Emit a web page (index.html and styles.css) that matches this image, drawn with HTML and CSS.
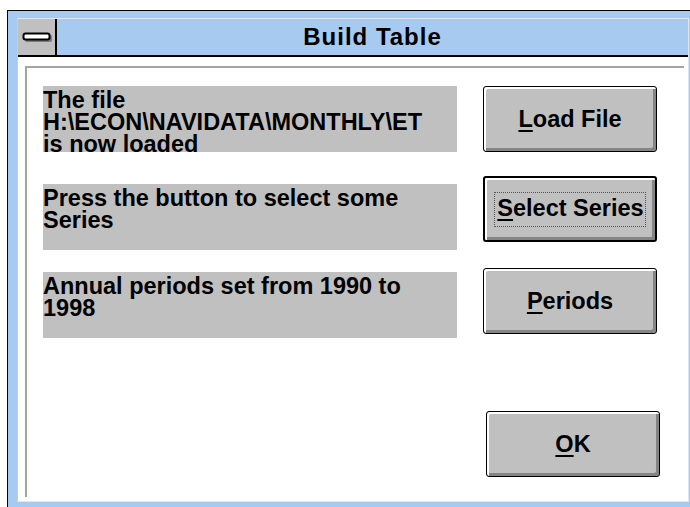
FILE: index.html
```html
<!DOCTYPE html>
<html lang="en">
<head>
<meta charset="utf-8">
<title>Build Table</title>
<link rel="stylesheet" href="styles.css">
</head>
<body>
<div class="window">
  <div class="frame">
    <div class="titlebar">
      <div class="sysmenu">
        <svg width="37" height="36" viewBox="0 0 37 36" aria-hidden="true">
          <rect x="7" y="16" width="27" height="7" rx="2" fill="#7a7a7a"/>
          <rect x="5.5" y="14.5" width="26" height="6" rx="2" fill="#fff" stroke="#000" stroke-width="2"/>
        </svg>
      </div>
      <div class="caption">Build Table</div>
    </div>
    <div class="client">
      <div class="panel">
        <div class="labels">
          <div class="label">The file<br><span class="path">H:\ECON\NAVIDATA\MONTHLY\ET</span><br>is now loaded</div>
          <div class="label label-series">Press the button to select some<br>Series</div>
          <div class="label label-periods">Annual periods set from 1990 to<br>1998</div>
        </div>
        <div class="buttons">
          <button class="btn" type="button"><u>L</u>oad File</button>
          <button class="btn btn-default btn-series" type="button"><span class="focus"><u>S</u>elect Series</span></button>
          <button class="btn btn-periods" type="button"><u>P</u>eriods</button>
          <button class="btn btn-ok" type="button"><u>O</u>K</button>
        </div>
      </div>
    </div>
  </div>
</div>
</body>
</html>
```

FILE: styles.css
```css
html, body {
  margin: 0;
  padding: 0;
  background: #fff;
  overflow: hidden;
}

body {
  width: 690px;
  height: 507px;
  font-family: "Liberation Sans", Arial, sans-serif;
  font-weight: bold;
  color: #000;
}

/* outer window: black edge + sky-blue sizing frame */
.window {
  margin: 10px 0 0 7px;
  width: 700px;
  height: 520px;
  border-top: 1px solid #000;
  border-left: 1px solid #000;
  background: #a6caf0;
  padding: 7px 0 0 9px;
  box-sizing: border-box;
}

.frame {
  width: 672px;
  height: 484px;
  box-sizing: border-box;
  border: 1px solid #dfe6ef;
  border-left-color: #c8ccd2;
  display: flex;
  flex-direction: column;
}

.titlebar {
  display: flex;
  height: 38px;
  box-sizing: border-box;
  border-bottom: 2px solid #000;
  background: #a6caf0;
}

.sysmenu {
  width: 37px;
  height: 36px;
  background: #c0c0c0;
  border-right: 2px solid #000;
}

.sysmenu svg {
  display: block;
}

.caption {
  flex: 1;
  text-align: center;
  font-size: 24px;
  letter-spacing: 1px;
  line-height: 36px;
}

.client {
  flex: 1;
  background: #fff;
  padding: 9px 4px 4px 7px;
  display: flex;
}

/* sunken group area */
.panel {
  flex: 1;
  border-top: 2px solid #a4a4a4;
  border-left: 2px solid #a4a4a4;
  padding: 18px 0 0 16px;
  display: flex;
  gap: 26px;
  align-items: flex-start;
}

.labels {
  display: flex;
  flex-direction: column;
  width: 414px;
}

.label {
  height: 66px;
  box-sizing: border-box;
  padding-top: 3px;
  background: #c0c0c0;
  font-size: 23.5px;
  line-height: 22px;
  overflow: hidden;
  white-space: nowrap;
}

.label-series {
  margin-top: 32px;
}

.label-periods {
  margin-top: 22px;
}

.buttons {
  display: flex;
  flex-direction: column;
  width: 174px;
}

.btn {
  width: 174px;
  height: 66px;
  box-sizing: border-box;
  margin: 0;
  padding: 0;
  border: 1px solid #000;
  border-radius: 3px;
  background: #c0c0c0;
  box-shadow: inset 2px 2px 0 #fff, inset -3px -3px 0 #858585;
  font-family: "Liberation Sans", Arial, sans-serif;
  font-weight: bold;
  font-size: 23.5px;
  color: #000;
  text-align: center;
}

.btn u {
  text-decoration-thickness: 2px;
  text-underline-offset: 3px;
}

.btn-default {
  border-width: 2px;
}

.btn-series {
  margin-top: 24px;
}

.focus {
  display: inline-block;
  padding: 2px 1px 5px 2px;
  border: 1px dotted #555;
  line-height: 26px;
}

.btn-periods {
  margin-top: 26px;
}

.btn-ok {
  margin-top: 77px;
  margin-left: 3px;
}
```
